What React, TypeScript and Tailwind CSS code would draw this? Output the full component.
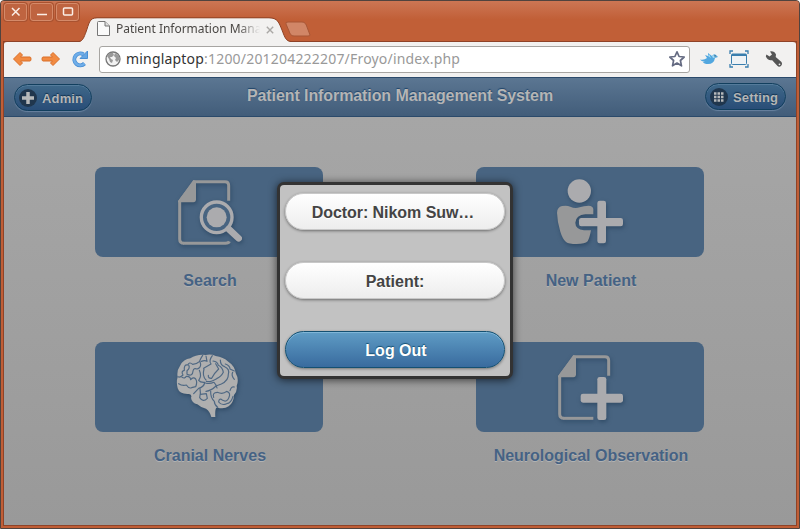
import type { ReactNode } from "react";

function WindowButton({ children }: { children: ReactNode }) {
  return (
    <div className="flex h-[18px] w-[23px] items-center justify-center rounded-[3px] border border-[#d58a69] bg-[#bf6440] shadow-[0_0_0_1px_#a95230]">
      <svg viewBox="0 0 14 12" className="h-3 w-3.5" fill="none" stroke="#fbeee6" strokeWidth="1.5">
        {children}
      </svg>
    </div>
  );
}

function TitleBar() {
  return (
    <div className="flex h-[41px] bg-linear-to-b from-[#cc7654] to-[#c15f37] to-45% pl-[3px]">
      <div className="flex gap-[3px] pt-[2px]">
        <WindowButton>
          <path d="M3 2l7.500 7.500M10.500 2l-7.500 7.500" />
        </WindowButton>
        <WindowButton>
          <path d="M2 8.500h10" />
        </WindowButton>
        <WindowButton>
          <rect x="2.500" y="2" width="9" height="7" rx="1" />
        </WindowButton>
      </div>
      <div className="relative flex h-[41px] w-[206px] items-start pt-[19px]">
        <svg viewBox="0 0 213 25" className="absolute top-4 left-0 h-[25px] w-[213px]">
          <path d="M0 25C4 24 5 20 7 15C10 7 10 1 18 1H190C199 1 200 6 203 13C206 21 207 24 212 25Z" fill="#f2f1f0" />
          <path d="M0 24.500C4 24 5 20 7 15C10 7 10 .8 18 .8H190C199 .8 200 6 203 13C206 21 207 24 212 24.500" fill="none" stroke="#8f4326" />
        </svg>
        <svg viewBox="0 0 15 17" className="relative ml-[17px] h-[17px] w-[15px] shrink-0" fill="#fafafa" stroke="#777">
          <path d="M1.500 2.500Q1.500 1.500 2.500 1.500H9L13.500 6V15.500H1.500Z" />
          <path d="M9 1.500V6H13.500" fill="#ddd" />
        </svg>
        <span className="relative ml-[5px] w-[144px] font-['Noto_Sans',sans-serif] text-[12px] leading-[18px] tracking-[-0.02px] whitespace-nowrap text-[#4a4744] [mask-image:linear-gradient(to_right,#000_85%,transparent)]">
          Patient Information Mana
        </span>
        <svg viewBox="0 0 8 8" className="relative mt-[6px] ml-[6px] h-2 w-2 shrink-0" stroke="#aaa8a5" strokeWidth="1.400">
          <path d="M.8 .8l6.400 6.400M7.200 .8L.8 7.200" />
        </svg>
      </div>
      <svg viewBox="0 0 26 16" className="mt-[20px] h-4 w-[26px]">
        <path d="M3 1H17C20 1 21 3 22 6L25 14Q25 15 23 15H9C6 15 5 13 4 10L1 3Q0 1 3 1Z" fill="#d18667" stroke="#a75737" />
      </svg>
    </div>
  );
}

function Toolbar() {
  return (
    <div className="flex h-9 shrink-0 items-center rounded-t-[3px] border-t border-[#984728] bg-[#f2f1f0] pb-px pl-2">
      <svg viewBox="0 0 20 16" className="h-4 w-5">
        <path d="M1.500 8L8 1.500L10.500 4L8.500 6H18Q19 6 19 8T18 10H8.500L10.500 12L8 14.500Z" fill="#f28b42" stroke="#d96f28" strokeLinejoin="round" />
      </svg>
      <svg viewBox="0 0 20 16" className="ml-[9px] h-4 w-5">
        <path d="M18.500 8L12 1.500L9.500 4L11.500 6H2Q1 6 1 8T2 10H11.500L9.500 12L12 14.500Z" fill="#f28b42" stroke="#d96f28" strokeLinejoin="round" />
      </svg>
      <svg viewBox="0 0 18 18" className="ml-[10px] h-[18px] w-[18px]" fill="none">
        <path d="M13.500 13.500A5.900 5.900 0 1 1 12.500 4.500" stroke="#4a8fd4" strokeWidth="4" />
        <path d="M13.500 13.500A5.900 5.900 0 1 1 12.500 4.500" stroke="#70aee9" strokeWidth="2.500" />
        <path d="M16.500 1V8.500H9Z" fill="#66a6e3" stroke="#4a8fd4" />
      </svg>
      <div className="ml-[10px] flex h-[27px] w-[591px] items-center rounded-[3px] border border-[#a7a5a2] bg-white pl-[5px]">
        <svg viewBox="0 0 16 16" className="h-4 w-4 shrink-0">
          <circle cx="8" cy="8" r="7" fill="#f2f2f2" stroke="#777" strokeWidth="1.300" />
          <path d="M2 5Q4 1 8 2L9 4L7 6L5 6L6 8L8 9L7 12L5 11L4 8Z M10 2L14 5L14 9L12 11L10 9L11 7L9 5Z" fill="#999" />
        </svg>
        <span className="ml-[5px] w-[540px] font-['Noto_Sans',sans-serif] text-[14px] leading-6 tracking-[0.19px] whitespace-nowrap text-[#999]">
          <span className="text-[#333]">minglaptop</span>:1200/201204222207/Froyo/index.php
        </span>
        <svg viewBox="0 0 18 18" className="ml-[2px] h-[18px] w-[18px] shrink-0">
          <path d="M9 1.800L11.100 6.500L16.200 7L12.400 10.500L13.500 15.800L9 13.100L4.500 15.800L5.600 10.500L1.800 7L6.900 6.500Z" fill="#fff" stroke="#656b82" strokeWidth="1.700" strokeLinejoin="round" />
        </svg>
      </div>
      <svg viewBox="0 0 20 14" className="ml-[9px] h-[14px] w-5">
        <path d="M1 7.500Q5 8.500 8 6L6 3L9 4L9 1L13 4Q15 1 17 3L19 5L16 6Q15 12 9 12Q5 12 4 10L6 10Q2 9 1 7.500Z" fill="#52a7df" />
        <path d="M9 4L12 6L10 2Z M13 4Q15 2 17 5L14 6Z" fill="#a4dbf5" />
        <circle cx="16" cy="4" r=".7" fill="#24506b" />
      </svg>
      <svg viewBox="0 0 20 18" className="ml-[10px] h-[18px] w-5" fill="none" stroke="#397eae">
        <path d="M1 4V1H4M16 1H19V4M19 14V17H16M4 17H1V14" strokeWidth="1.300" />
        <rect x="2.500" y="4" width="15" height="10.500" rx="1" fill="#eef2f5" />
        <path d="M3 5H17" strokeWidth="2" />
      </svg>
      <svg viewBox="0 0 18 18" className="ml-[16px] h-[18px] w-[18px]">
        <path d="M5 1.500Q9 .5 11 4.500L10.700 7L16.500 12Q18 14 16 16Q14 17.500 12.300 15.800L7.200 10.200Q2.500 11 .8 6.200L1.500 4.500L4.500 6.500L7 4.500Z" fill="#555" />
        <circle cx="14.500" cy="14.300" r=".9" fill="#eee" />
      </svg>
    </div>
  );
}

function HeaderButton({ label, width, children }: { label: string; width: string; children: ReactNode }) {
  return (
    <button
      className={`${width} flex h-[27px] items-center rounded-full border border-[#123f5e] bg-linear-to-b from-[#3f6889] to-[#294d77] pl-1 shadow-[inset_0_1px_0_#547b9b,0_1px_1px_#6982a0]`}
    >
      <svg viewBox="0 0 18 18" className="h-[18px] w-[18px]">
        <circle cx="9" cy="9" r="9" fill="#20364d" />
        {children}
      </svg>
      <span className="ml-[5px] pt-[2px] text-[13px] font-bold tracking-[0.15px] text-[#b4b5b6] [text-shadow:0_-1px_1px_#12324f]">{label}</span>
    </button>
  );
}

function Header() {
  return (
    <div className="flex h-10 shrink-0 items-start justify-between border-y border-[#2b4a6b] bg-linear-to-b from-[#5b7692] to-[#425d7a] px-[10px]">
      <div className="w-[110px] pt-[6px]">
        <HeaderButton label="Admin" width="w-[78px]">
          <path d="M9 3v12M3 9h12" stroke="#b7b9ba" strokeWidth="3.500" />
        </HeaderButton>
      </div>
      <h1 className="pt-[7px] text-[16px] leading-[22px] font-bold tracking-[-0.09px] text-[#b5b5b5] [text-shadow:0_-1px_1px_#20456b]">
        Patient Information Management System
      </h1>
      <div className="flex w-[110px] justify-end pt-[5px]">
        <HeaderButton label="Setting" width="w-[81px]">
          {[4, 7.5, 11].map((y) => (
            <path key={y} d={`M4 ${y + 1.5}h2.500m1 0h2.500m1 0h2.500`} stroke="#b7b9ba" strokeWidth="2.500" />
          ))}
        </HeaderButton>
      </div>
    </div>
  );
}

function DocumentOutline({ bottom }: { bottom: ReactNode }) {
  return (
    <>
      <path d="M176 92V46Q176 35 165 35H73L29 94V207Q29 220 42 220" fill="none" stroke="#979899" strokeWidth="9" />
      <path d="M70 30L24 94V97H70Q78 97 78 88V34Z" fill="#979899" />
      {bottom}
    </>
  );
}

function SearchIcon() {
  return (
    <>
      <DocumentOutline bottom={<path d="M40 220H166Q176 219 178 214" fill="none" stroke="#979899" strokeWidth="9" />} />
      <circle cx="140" cy="142" r="51" fill="#486481" />
      <circle cx="140" cy="142" r="46" fill="none" stroke="#ababae" strokeWidth="10" />
      <circle cx="140" cy="142" r="30" fill="#ababae" />
      <path d="M176 177L206 205" stroke="#ababae" strokeWidth="20" strokeLinecap="round" />
      <path d="M173 174L183 184" stroke="#ababae" strokeWidth="14" />
    </>
  );
}

function NewPatientIcon() {
  return (
    <>
      <circle cx="88" cy="63" r="35" fill="#ababae" />
      <path d="M36 108Q22 111 21 128Q22 157 31 185Q38 208 48 216Q56 222 80 222Q105 222 113 214Q119 203 123 181H102Q76 177 76 158Q78 135 106 133H130V117Q129 108 116 107Q101 107 89 112Q75 117 61 110Q51 105 36 108Z" fill="#979899" />
      <rect x="142" y="92" width="26" height="128" rx="7" fill="#ababae" />
      <rect x="87" y="144" width="132" height="25" rx="7" fill="#ababae" />
    </>
  );
}

function BrainIcon() {
  return (
    <>
      <path d="M23 96Q19 78 31 61Q40 43 61 40Q80 27 107 30Q123 26 137 33Q160 36 175 50Q194 62 197 84Q208 103 200 123Q203 138 192 150Q191 173 176 184Q163 193 143 188Q134 184 136 216H124Q120 199 108 191Q91 187 82 178Q65 174 63 158Q67 149 57 147Q29 149 23 130Q18 111 23 96Z" fill="#afafaf" />
      <g fill="none" stroke="#4f6883" strokeWidth="3.500" strokeLinecap="round" strokeLinejoin="round">
        <path d="M24 95Q29 99 39 90Q32 79 43 76Q41 58 53 60Q58 49 68 58Q80 58 88 50Q92 40 98 31" />
        <path d="M56 60Q61 70 51 77L51 88Q68 96 69 78Q71 68 81 72Q92 70 92 58L90 50" />
        <path d="M36 97Q45 102 49 94Q61 93 62 104Q70 94 77 102Q83 111 77 125L65 128Q57 132 49 120Q36 123 26 116" />
        <path d="M88 76Q96 93 86 106Q91 113 104 112Q103 125 86 130L71 146" />
        <path d="M94 49Q105 45 111 49L108 33M101 70L123 57Q115 48 127 32M102 72Q96 93 108 105" />
        <path d="M115 91Q114 101 125 100Q134 83 146 72L137 56" />
        <path d="M129 48Q143 50 145 61Q157 66 160 82Q153 96 140 101Q120 113 109 109" />
        <path d="M151 45Q151 61 164 65Q180 72 175 88Q176 107 154 117L138 123Q124 137 108 139" />
        <path d="M166 57Q180 62 180 72L193 78M188 82Q183 92 193 103" />
        <path d="M106 114Q119 118 132 112Q139 119 141 129M90 131Q93 145 89 158Q99 173 112 160L109 146L91 148" />
        <path d="M131 157Q126 143 142 142Q159 149 170 139Q183 143 177 157Q171 173 158 166Q147 157 146 171Q155 183 170 176Q183 175 189 154" />
        <path d="M193 126Q184 123 180 137M122 139Q121 158 133 169Q133 180 143 187" />
      </g>
    </>
  );
}

function ObservationIcon() {
  return (
    <>
      <DocumentOutline bottom={<path d="M40 220H130" fill="none" stroke="#979899" strokeWidth="9" />} />
      <rect x="142" y="96" width="27" height="129" rx="7" fill="#ababae" />
      <rect x="92" y="146" width="127" height="27" rx="7" fill="#ababae" />
    </>
  );
}

function Tile({ label, viewBox, children }: { label: string; viewBox: string; children: ReactNode }) {
  return (
    <div className="flex h-[175px] w-[228px] flex-col items-center">
      <div className="flex h-[90px] w-full justify-center rounded-[8px] bg-[#486481] pt-[3px]">
        <svg viewBox={viewBox} className="h-[85px] w-20 drop-shadow-[1px_2px_2px_#304b66]">
          {children}
        </svg>
      </div>
      <div className="mt-[13px] pl-[2px] text-[16px] leading-[22px] font-bold whitespace-nowrap text-[#456284] [text-shadow:0_1px_0_#b3b3b3]">{label}</div>
    </div>
  );
}

function DialogButton({ children }: { children: ReactNode }) {
  return (
    <button className="h-[38px] w-full rounded-[19px] border border-[#c8c8c8] bg-linear-to-b from-white to-[#ededed] pt-[2px] text-[16px] font-bold text-[#444] shadow-[0_1px_3px_rgba(0,0,0,.45)] [text-shadow:0_1px_0_#fff]">
      {children}
    </button>
  );
}

export default function App() {
  return (
    <div className="relative flex h-[529px] w-[800px] flex-col overflow-hidden rounded-t-[4px] border border-[#50433e] bg-[#c05e36] font-['Liberation_Sans',Arial,sans-serif]">
      <TitleBar />
      <div className="mx-[3px] mb-[3px] flex min-h-0 grow flex-col outline outline-[#8f4328]">
        <div className="-mt-px">
          <Toolbar />
        </div>
        <Header />
        <main className="grid grow grid-cols-[228px_228px] content-start gap-x-[153px] bg-linear-to-b from-[#a6a6a6] to-[#999] pt-[50px] pl-[91px]">
          <Tile label="Search" viewBox="-3 0 240 255">
            <SearchIcon />
          </Tile>
          <Tile label="New Patient" viewBox="0 0 240 255">
            <NewPatientIcon />
          </Tile>
          <Tile label="Cranial Nerves" viewBox="-3 0 240 255">
            <BrainIcon />
          </Tile>
          <Tile label="Neurological Observation" viewBox="0 0 240 255">
            <ObservationIcon />
          </Tile>
        </main>
      </div>
      <div className="absolute top-[181px] left-[276px] flex h-[197px] w-[236px] flex-col gap-[32px] rounded-[7px] border-[3px] border-[#333] bg-[#c2c2c2] px-[5px] pt-[8px] shadow-[0_1px_8px_rgba(0,0,0,.65)] *:h-[37px]!">
        <DialogButton><span className="tracking-[-0.05px] relative right-[2px]">Doctor: Nikom Suw…</span></DialogButton>
        <DialogButton>Patient:</DialogButton>
        <button className="w-full rounded-[19px] border border-[#145072] bg-linear-to-b from-[#5f9cc5] to-[#396b9e] pt-[2px] pl-[2px] text-[16px] font-bold text-white shadow-[inset_0_1px_0_#80b6d8,0_1px_3px_rgba(0,0,0,.4)] [text-shadow:0_-1px_1px_#145072]">
          Log Out
        </button>
      </div>
    </div>
  );
}
